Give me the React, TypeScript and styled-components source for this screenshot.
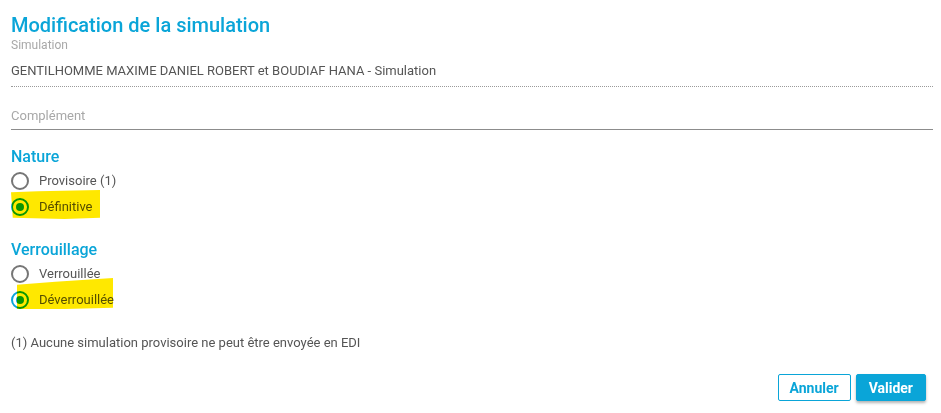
import styled, { createGlobalStyle } from 'styled-components';

const GlobalStyle = createGlobalStyle`
  html, body {
    margin: 0;
    padding: 0;
    background: #ffffff;
  }
  body {
    font-family: Roboto, "Liberation Sans", Arial, sans-serif;
    color: #555555;
  }
`;

const natureOptions = [
  { label: 'Provisoire (1)', checked: false },
  { label: 'Définitive', checked: true, marker: 'nature' },
];

const lockOptions = [
  { label: 'Verrouillée', checked: false },
  { label: 'Déverrouillée', checked: true, marker: 'lock' },
];

const App = () => {
  return (
    <>
      <GlobalStyle />
      <Page>
        <Title>Modification de la simulation</Title>

        <Field>
          <FieldLabel>Simulation</FieldLabel>
          <ReadOnlyValue>GENTILHOMME MAXIME DANIEL ROBERT et BOUDIAF HANA - Simulation</ReadOnlyValue>
        </Field>

        <InputField>
          <Placeholder>Complément</Placeholder>
        </InputField>

        <Section>
          <SectionTitle>Nature</SectionTitle>
          <RadioList>
            {natureOptions.map((opt) => (
              <RadioRow key={opt.label}>
                {opt.marker && <Marker $kind="nature" />}
                <RadioCircle $checked={opt.checked} />
                <RadioLabel>{opt.label}</RadioLabel>
              </RadioRow>
            ))}
          </RadioList>
        </Section>

        <Section $gap={24}>
          <SectionTitle>Verrouillage</SectionTitle>
          <RadioList>
            {lockOptions.map((opt) => (
              <RadioRow key={opt.label}>
                {opt.marker && <Marker $kind="lock" />}
                <RadioCircle $checked={opt.checked} />
                <RadioLabel>{opt.label}</RadioLabel>
              </RadioRow>
            ))}
          </RadioList>
        </Section>

        <Footnote>(1) Aucune simulation provisoire ne peut être envoyée en EDI</Footnote>

        <Actions>
          <OutlineButton>Annuler</OutlineButton>
          <PrimaryButton>Valider</PrimaryButton>
        </Actions>
      </Page>
    </>
  );
};

const Page = styled.div`
  width: 941px;
  height: 413px;
  box-sizing: border-box;
  padding: 12px 8px 0 11px;
  display: flex;
  flex-direction: column;
`;

const Title = styled.h1`
  margin: 0;
  font-size: 20px;
  line-height: 26px;
  font-weight: 500;
  color: #0aa5d8;
`;

const Field = styled.div`
  display: flex;
  flex-direction: column;
`;

const FieldLabel = styled.div`
  font-size: 12px;
  line-height: 14px;
  color: #a8a8a8;
`;

const ReadOnlyValue = styled.div`
  margin-top: 11px;
  font-size: 13px;
  line-height: 16px;
  padding-bottom: 7px;
  color: #555555;
  border-bottom: 1px dotted #9a9a9a;
`;

const InputField = styled.div`
  margin-top: 21px;
  padding-bottom: 5px;
  border-bottom: 1px solid #8c8c8c;
`;

const Placeholder = styled.div`
  font-size: 13px;
  line-height: 16px;
  color: #a8a8a8;
`;

const Section = styled.div<{ $gap?: number }>`
  margin-top: ${({ $gap }) => $gap ?? 17}px;
  display: flex;
  flex-direction: column;
`;

const SectionTitle = styled.h2`
  margin: 0;
  font-size: 16px;
  line-height: 20px;
  font-weight: 500;
  color: #0aa5d8;
`;

const RadioList = styled.div`
  margin-top: 5px;
  display: flex;
  flex-direction: column;
  gap: 8px;
`;

const RadioRow = styled.label`
  position: relative;
  display: flex;
  align-items: center;
  gap: 10px;
  height: 18px;
`;

const RadioCircle = styled.span<{ $checked: boolean }>`
  position: relative;
  width: 18px;
  height: 18px;
  box-sizing: border-box;
  border-radius: 50%;
  border: 2px solid ${({ $checked }) => ($checked ? '#0aa5d8' : '#767676')};
  &::after {
    content: '';
    display: ${({ $checked }) => ($checked ? 'block' : 'none')};
    position: absolute;
    left: 3px;
    top: 3px;
    width: 8px;
    height: 8px;
    border-radius: 50%;
    background: #0aa5d8;
  }
`;

const RadioLabel = styled.span`
  font-size: 13px;
  line-height: 16px;
  color: #555555;
`;

/* yellow highlighter strokes drawn over the screenshot */
const Marker = styled.span<{ $kind: 'nature' | 'lock' }>`
  position: absolute;
  z-index: 2;
  pointer-events: none;
  background: #ffe800;
  mix-blend-mode: multiply;
  ${({ $kind }) =>
    $kind === 'nature'
      ? `
    left: 0px;
    top: -8px;
    width: 89px;
    height: 29px;
    clip-path: polygon(0 8%, 30% 4%, 100% 0, 100% 96%, 60% 100%, 2% 96%);
  `
      : `
    left: 6px;
    top: -13px;
    width: 96px;
    height: 31px;
    clip-path: polygon(0 22%, 40% 12%, 100% 0, 100% 96%, 50% 100%, 0 100%);
  `}
`;

const Footnote = styled.p`
  margin: 26px 0 0;
  font-size: 13px;
  line-height: 16px;
  color: #555555;
`;

const Actions = styled.div`
  margin-top: 23px;
  display: flex;
  justify-content: flex-end;
  gap: 5px;
  padding-right: 7px;
`;

const OutlineButton = styled.button`
  height: 27px;
  padding: 0 11px;
  font-family: Roboto, "Liberation Sans", Arial, sans-serif;
  font-size: 14px;
  font-weight: 700;
  color: #0aa5d8;
  background: #ffffff;
  border: 1px solid #0aa5d8;
  border-radius: 2px;
`;

const PrimaryButton = styled.button`
  height: 27px;
  padding: 0 12px;
  font-family: Roboto, "Liberation Sans", Arial, sans-serif;
  font-size: 14px;
  font-weight: 700;
  color: #ffffff;
  background: #0aa5d8;
  border: 1px solid #0aa5d8;
  border-radius: 2px;
  box-shadow: 0 2px 3px rgba(0, 0, 0, 0.3);
`;

export default App;
